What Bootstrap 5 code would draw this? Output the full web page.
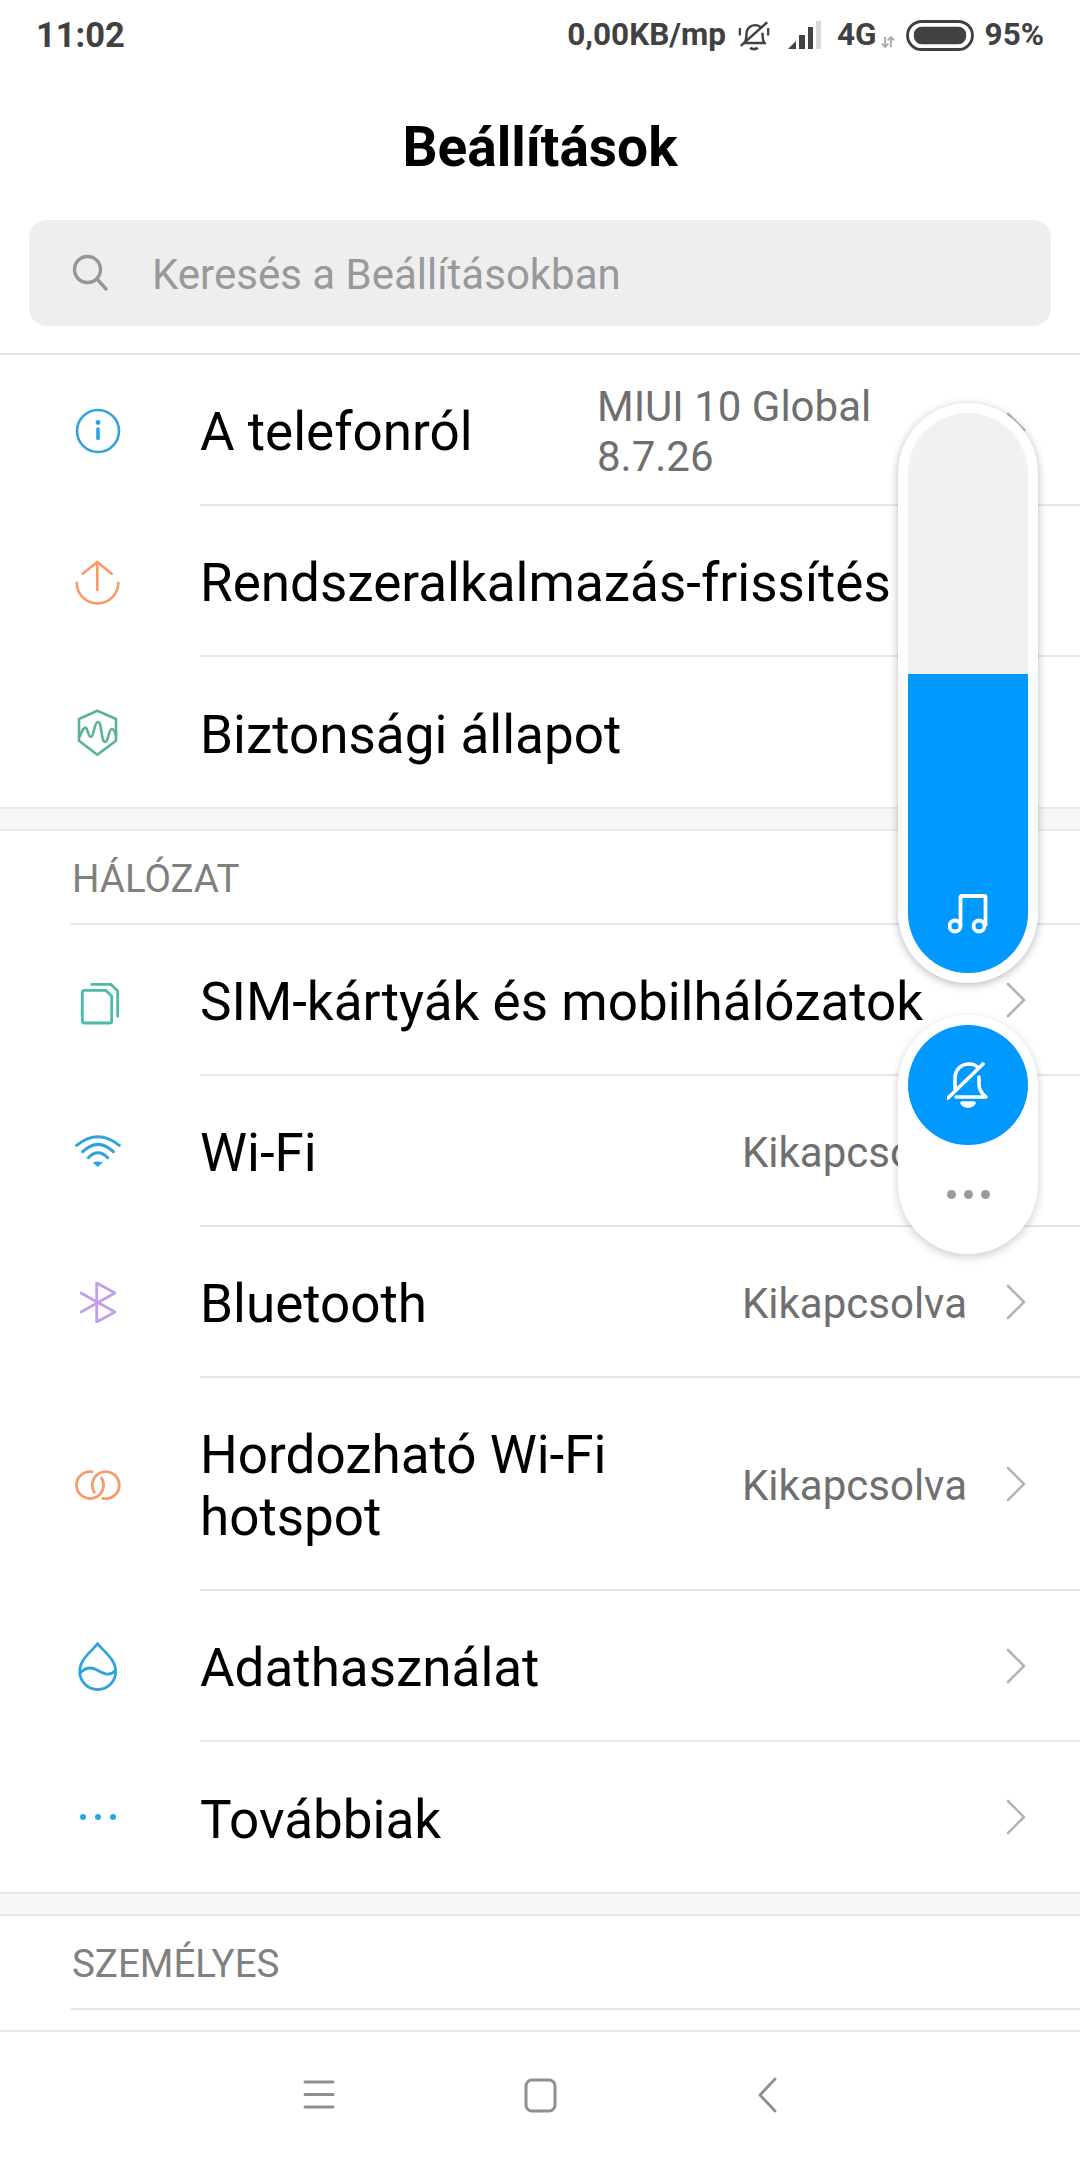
<!DOCTYPE html>
<html lang="hu">
<head>
<meta charset="utf-8">
<title>Beállítások</title>
<link href="https://cdn.jsdelivr.net/npm/bootstrap@5.3.0/dist/css/bootstrap.min.css" rel="stylesheet">
<style>
html,body{margin:0;background:#fff;}
body{font-family:Roboto,"Liberation Sans",sans-serif;color:#000;}
.phone{width:1080px;height:2160px;overflow:hidden;position:relative;background:#fff;}
.status{height:70px;padding:0 36px;color:#414141;font-size:31.500px;font-weight:700;line-height:1;}
.status svg{display:block;flex:none;}
.st-time{font-size:34.500px;}
.st-bell{margin-left:11px;}
.st-sig{margin-left:17px;}
.st-4g{margin-left:15px;}
.st-arr{margin-top:14px;margin-left:4px;margin-right:1px;}
.st-bat{margin-left:10px;}
.st-pct{margin-left:11px;}
.page-title{height:150px;font-family:Roboto,"Liberation Sans",sans-serif;font-size:55px;font-weight:700;margin:0;padding-top:3px;}
.searchbox{height:106px;margin:0 29px;background:#eeeeee;border-radius:18px;padding-left:43px;color:#999;font-size:42px;}
.searchbox svg{margin-right:42px;flex:none;}
.searchbox span{padding-top:3px;}
.gap-search{height:29px;border-bottom:2px solid #e4e4e4;}
.main-scroll{flex:1 1 auto;min-height:0;overflow:hidden;}
.srow{height:151px;}
.srow.endrow{height:150px;}
.srow.tall{height:213px;}
.ico{width:200px;padding-right:5px;flex:none;}
.ico svg{display:block;}
.ico-sim{margin-left:5px;margin-top:6px;}
.sbody{height:100%;border-bottom:2px solid #e6e6e6;min-width:0;padding-right:54px;}
.endrow .sbody{border-bottom:0;}
.slabel{font-size:53px;line-height:62px;flex:1 1 auto;white-space:nowrap;padding-top:5px;}
.sval{font-size:42px;line-height:50px;color:#6f6f6f;white-space:nowrap;margin-right:39px;padding-top:5px;}
.sval-wrap{width:370px;white-space:normal;}
.chev{flex:none;display:block;}
.sgap{height:24px;background:#f7f7f7;border-top:2px solid #e8e8e8;border-bottom:2px solid #e8e8e8;}
.shead{height:94px;margin-left:71px;padding-left:1px;padding-top:4px;font-size:38.500px;color:#808080;border-bottom:2px solid #e6e6e6;}
.navbar-soft{height:130px;flex:none;border-top:2px solid #e8e8e8;background:#fff;}
.navbar-soft svg{position:absolute;}
.nv-menu{left:303px;top:47px;}
.nv-home{left:524px;top:46px;}
.nv-back{left:758px;top:45px;}
.volume{position:absolute;left:898px;top:403px;width:140px;height:580px;padding:10px;background:#fff;border-radius:70px;box-shadow:0 2px 8px rgba(0,0,0,.28);}
.vol-track{height:100%;border-radius:60px;overflow:hidden;background:#f1f1f1;}
.vol-fill{background:#0099ff;height:299px;padding-top:220px;}
.ringer{position:absolute;left:898px;top:1015px;width:140px;height:239px;padding:10px;background:#fff;border-radius:70px;box-shadow:0 3px 10px rgba(0,0,0,.2);}
.ring-btn{width:120px;height:120px;border-radius:50%;background:#0099ff;}
.ring-dots{height:98px;}
.ring-dots i{display:block;width:9px;height:9px;border-radius:50%;background:#9a9a9a;}
</style>
</head>
<body>
<div class="phone d-flex flex-column">
  <div class="status d-flex align-items-center flex-none">
    <span class="st-time">11:02</span>
    <span class="ms-auto">0,00KB/mp</span>
    <svg class="st-bell" width="34" height="33" viewBox="0 0 36 34" fill="none" stroke="#414141" stroke-width="2.6"><path d="M8 25c2-3 2-5 2-10 0-5 4-9 9-9 3 0 5 1 7 3M27 14c0 5 0 8 2 11H7"/><path d="M14 30c2 2 6 2 8 0" stroke-width="3"/><path d="M4 28 32 3"/><path d="M3 9v8M33 9v8" stroke-width="2.4"/></svg>
    <svg class="st-sig" width="34" height="30" viewBox="0 0 34 30"><path d="M0 29 8 21v8z" fill="#414141"/><rect x="11" y="15" width="6" height="14" fill="#414141"/><rect x="20" y="7" width="5" height="22" fill="#414141"/><rect x="28" y="1" width="5" height="28" fill="#d8d8d8"/></svg>
    <span class="st-4g">4G</span>
    <svg class="st-arr" width="14" height="14" viewBox="0 0 17 16" fill="none" stroke="#aaa" stroke-width="2.4"><path d="M5 2v12M1 10l4 4 4-4M12 14V2M8 6l4-4 4 4"/></svg>
    <svg class="st-bat" width="68" height="31" viewBox="0 0 70 32"><rect x="1.5" y="1.5" width="67" height="29" rx="14.5" fill="none" stroke="#414141" stroke-width="3"/><rect x="8" y="7" width="54" height="18" rx="8" fill="#414141"/></svg>
    <span class="st-pct">95%</span>
  </div>

  <h1 class="page-title d-flex align-items-center justify-content-center flex-none">Beállítások</h1>

  <div class="searchbox d-flex align-items-center flex-none">
    <svg width="38" height="38" viewBox="0 0 38 38" fill="none" stroke="#969696" stroke-width="3.4" stroke-linecap="round"><circle cx="15.5" cy="15.5" r="13"/><path d="M25 25l9 10"/></svg>
    <span>Keresés a Beállításokban</span>
  </div>
  <div class="gap-search flex-none"></div>

  <div class="main-scroll">
    <div class="srow d-flex align-items-center">
      <div class="ico d-flex justify-content-center"><svg width="46" height="46" viewBox="0 0 46 46" fill="none" stroke="#2fa3dc" stroke-width="2.6" stroke-linecap="round"><circle cx="23" cy="23" r="21"/><circle cx="23" cy="14.5" r="2.4" fill="#2fa3dc" stroke="none"/><path d="M23 21v9.5" stroke-width="3.6"/></svg></div>
      <div class="sbody d-flex align-items-center flex-grow-1">
        <div class="slabel">A telefonról</div>
        <div class="sval sval-wrap">MIUI 10 Global 8.7.26</div>
        <svg class="chev" width="20" height="36" viewBox="0 0 20 36" fill="none" stroke="#b4b4b4" stroke-width="2.6" stroke-linecap="round"><path d="M2 2l16 16L2 34"/></svg>
      </div>
    </div>
    <div class="srow d-flex align-items-center">
      <div class="ico d-flex justify-content-center"><svg width="45" height="46" viewBox="0 0 45 46" fill="none" stroke="#f99a67" stroke-width="2.6" stroke-linecap="round" stroke-linejoin="round"><path d="M1.700 23.700A20.800 20.800 0 0 0 43.300 23.700"/><path d="M22.300 31V3M7.700 14.700 22.300 3l14.400 11.700"/></svg></div>
      <div class="sbody d-flex align-items-center flex-grow-1">
        <div class="slabel">Rendszeralkalmazás-frissítés</div>
      </div>
    </div>
    <div class="srow endrow d-flex align-items-center">
      <div class="ico d-flex justify-content-center"><svg width="41" height="47" viewBox="0 0 41 47" fill="none" stroke="#59b394" stroke-width="2.600" stroke-linecap="round" stroke-linejoin="round"><path d="M20.300 1.700 39 10v21.700L20.300 45.700 2 31.700V10z"/><path d="M3 27C5 21 7 18 9 19c2 1 2 9 5 9s3-15 7-15 3 20 7 20 3-13 7-13c2 0 3 3 4 6"/></svg></div>
      <div class="sbody d-flex align-items-center flex-grow-1">
        <div class="slabel">Biztonsági állapot</div>
      </div>
    </div>
    <div class="sgap"></div>
    <div class="shead d-flex align-items-center">HÁLÓZAT</div>
    <div class="srow d-flex align-items-center">
      <div class="ico d-flex justify-content-center"><svg class="ico-sim" width="41" height="44" viewBox="0 0 41 44" fill="none" stroke="#4abba7" stroke-width="2.800" stroke-linecap="round" stroke-linejoin="round"><path d="M4.300 8.300h21.400l6 6V39a2 2 0 0 1-2 2H4.300a2 2 0 0 1-2-2V10.300a2 2 0 0 1 2-2z"/><path d="M11.700 2.300h19l7 6.700v25.300"/></svg></div>
      <div class="sbody d-flex align-items-center flex-grow-1">
        <div class="slabel">SIM-kártyák és mobilhálózatok</div>
        <svg class="chev" width="20" height="36" viewBox="0 0 20 36" fill="none" stroke="#b4b4b4" stroke-width="2.6" stroke-linecap="round"><path d="M2 2l16 16L2 34"/></svg>
      </div>
    </div>
    <div class="srow d-flex align-items-center">
      <div class="ico d-flex justify-content-center"><svg width="46" height="34" viewBox="0 0 46 34" fill="none" stroke="#2fa3dc" stroke-width="3" stroke-linecap="round"><path d="M1.700 10.300Q22.700-6.900 44.300 10.300"/><path d="M7.700 16.700Q23 1.900 38.300 16.700"/><path d="M13.300 22.700Q23 12.700 32.700 22.700"/><path d="M22.700 32l-5-4.500c3-1.500 7-1.500 10 0z" fill="#2fa3dc" stroke="none"/></svg></div>
      <div class="sbody d-flex align-items-center flex-grow-1">
        <div class="slabel">Wi-Fi</div>
        <div class="sval">Kikapcsolva</div>
        <svg class="chev" width="20" height="36" viewBox="0 0 20 36" fill="none" stroke="#b4b4b4" stroke-width="2.6" stroke-linecap="round"><path d="M2 2l16 16L2 34"/></svg>
      </div>
    </div>
    <div class="srow d-flex align-items-center">
      <div class="ico d-flex justify-content-center"><svg width="36" height="41" viewBox="0 0 36 41" fill="none" stroke="#c29fea" stroke-width="2.800" stroke-linecap="round" stroke-linejoin="round"><path d="M1 11 35 30 16.700 40V1L35 11 1 30"/></svg></div>
      <div class="sbody d-flex align-items-center flex-grow-1">
        <div class="slabel">Bluetooth</div>
        <div class="sval">Kikapcsolva</div>
        <svg class="chev" width="20" height="36" viewBox="0 0 20 36" fill="none" stroke="#b4b4b4" stroke-width="2.6" stroke-linecap="round"><path d="M2 2l16 16L2 34"/></svg>
      </div>
    </div>
    <div class="srow tall d-flex align-items-center">
      <div class="ico d-flex justify-content-center"><svg width="46" height="30" viewBox="0 0 46 30" fill="none" stroke="#f99a67" stroke-width="2.800" stroke-linecap="round"><path d="M17 1.700A13.500 13.500 0 1 0 26.700 8.300"/><path d="M27.700 28.300A13.500 13.500 0 1 0 19.300 22.300"/></svg></div>
      <div class="sbody d-flex align-items-center flex-grow-1">
        <div class="slabel">Hordozható Wi-Fi<br>hotspot</div>
        <div class="sval">Kikapcsolva</div>
        <svg class="chev" width="20" height="36" viewBox="0 0 20 36" fill="none" stroke="#b4b4b4" stroke-width="2.6" stroke-linecap="round"><path d="M2 2l16 16L2 34"/></svg>
      </div>
    </div>
    <div class="srow d-flex align-items-center">
      <div class="ico d-flex justify-content-center"><svg width="40" height="50" viewBox="0 0 40 50" fill="none" stroke="#2fa3dc" stroke-width="2.800" stroke-linecap="round" stroke-linejoin="round"><path d="M19.700 1.700C14 9 1.700 17 1.700 29.500a18 18 0 0 0 36 0C37.700 17 25 9 19.700 1.700z"/><path d="M2 31c6-6 12-6 17-3s12 7 18 1"/></svg></div>
      <div class="sbody d-flex align-items-center flex-grow-1">
        <div class="slabel">Adathasználat</div>
        <svg class="chev" width="20" height="36" viewBox="0 0 20 36" fill="none" stroke="#b4b4b4" stroke-width="2.6" stroke-linecap="round"><path d="M2 2l16 16L2 34"/></svg>
      </div>
    </div>
    <div class="srow endrow d-flex align-items-center">
      <div class="ico d-flex justify-content-center"><svg width="36" height="8" viewBox="0 0 36 8" fill="#2fa3dc"><circle cx="3" cy="4" r="3"/><circle cx="18" cy="4" r="3"/><circle cx="33" cy="4" r="3"/></svg></div>
      <div class="sbody d-flex align-items-center flex-grow-1">
        <div class="slabel">Továbbiak</div>
        <svg class="chev" width="20" height="36" viewBox="0 0 20 36" fill="none" stroke="#b4b4b4" stroke-width="2.6" stroke-linecap="round"><path d="M2 2l16 16L2 34"/></svg>
      </div>
    </div>
    <div class="sgap"></div>
    <div class="shead d-flex align-items-center">SZEMÉLYES</div>
  </div>

  <div class="navbar-soft d-flex align-items-center position-relative">
    <svg class="nv-menu" width="32" height="30" viewBox="0 0 32 30" stroke="#8f8f8f" stroke-width="3" stroke-linecap="round"><path d="M2 3h28M2 15.500h28M2 28h28"/></svg>
    <svg class="nv-home" width="33" height="35" viewBox="0 0 33 35" fill="none" stroke="#8f8f8f" stroke-width="3"><rect x="2" y="2" width="29" height="31" rx="6"/></svg>
    <svg class="nv-back" width="19" height="36" viewBox="0 0 19 36" fill="none" stroke="#8f8f8f" stroke-width="2.8" stroke-linecap="round" stroke-linejoin="round"><path d="M17 2 2 18l15 16"/></svg>
  </div>

  <div class="volume">
    <div class="vol-track d-flex flex-column">
      <div class="flex-grow-1"></div>
      <div class="vol-fill d-flex justify-content-center">
        <svg width="40" height="40" viewBox="0 0 40 40" fill="none" stroke="#fff" stroke-width="3.800" stroke-linejoin="round"><circle cx="7" cy="32" r="5.500"/><circle cx="31" cy="32" r="5.500"/><path d="M12.500 32V3a1 1 0 0 1 1-1h23a1 1 0 0 1 1 1v29"/></svg>
      </div>
    </div>
  </div>
  <div class="ringer">
    <div class="ring-btn d-flex align-items-center justify-content-center">
      <svg width="42" height="46" viewBox="0 0 42 46" fill="none" stroke="#fff" stroke-width="3.600" stroke-linecap="round" stroke-linejoin="round"><path d="M8 27V16C8 8 14 2 22 2c4 0 7 1 9 4"/><path d="M32 15v7c0 5 3 10 7 13H9"/><path d="M1 36 36 2"/><path d="M15 41h12c-2 4-10 4-12 0z" fill="#fff"/></svg>
    </div>
    <div class="ring-dots d-flex align-items-center justify-content-center gap-2"><i></i><i></i><i></i></div>
  </div>
</div>
<script src="https://cdn.jsdelivr.net/npm/bootstrap@5.3.0/dist/js/bootstrap.bundle.min.js"></script>
</body>
</html>
